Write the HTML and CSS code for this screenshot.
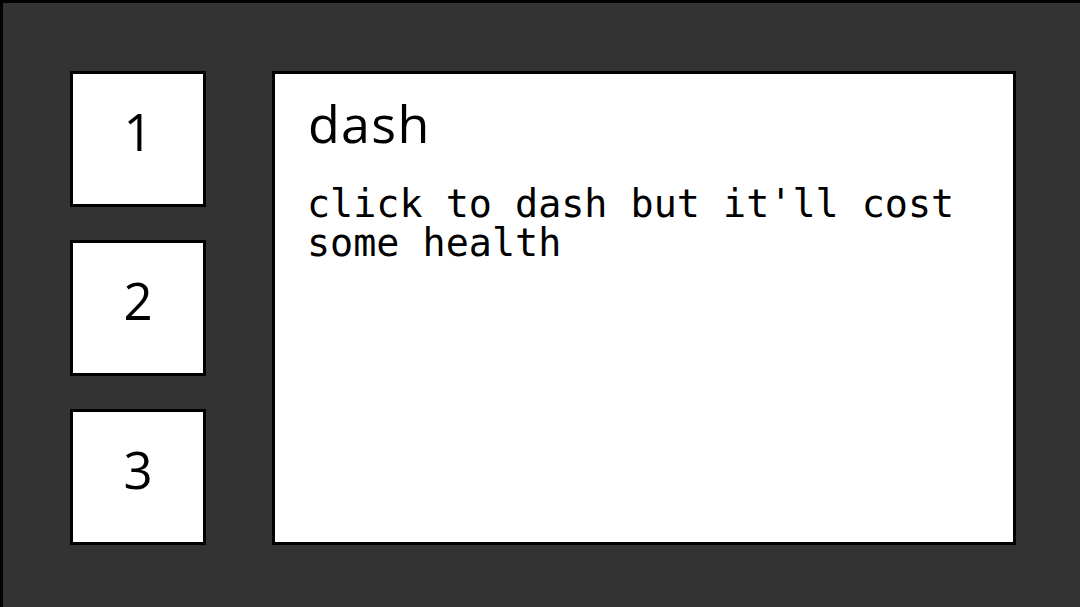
FILE: index.html
```html
<!DOCTYPE html>
<html>
<head>
<meta charset="utf-8">
<link rel="stylesheet" href="styles.css">
</head>
<body>
<div class="frame">
  <div class="slots">
    <div class="slot">1</div>
    <div class="slot">2</div>
    <div class="slot">3</div>
  </div>
  <div class="panel">
    <h1 class="title">dash</h1>
    <p class="desc">click to dash but it'll cost some health</p>
  </div>
</div>
</body>
</html>
```

FILE: styles.css
```css
html, body {
  margin: 0;
  padding: 0;
  width: 1080px;
  height: 607px;
  overflow: hidden;
  background: #333333;
}
.frame {
  box-sizing: border-box;
  width: 1080px;
  height: 607px;
  border-left: 3px solid #000;
  border-top: 3px solid #000;
  background: #333333;
  padding: 68px 0 0 67px;
  display: flex;
  align-items: flex-start;
  gap: 66px;
}
.slots {
  display: flex;
  flex-direction: column;
  gap: 33px;
  width: 136px;
}
.slot {
  box-sizing: border-box;
  width: 136px;
  height: 136px;
  background: #fff;
  border: 3px solid #000;
  display: flex;
  align-items: center;
  justify-content: center;
  padding-bottom: 17px;
  font-family: "Open Sans", sans-serif;
  font-size: 51px;
  color: #000;
}
.panel {
  box-sizing: border-box;
  width: 744px;
  height: 474px;
  background: #fff;
  border: 3px solid #000;
  padding: 13px 30px 0 32px;
}
.title {
  margin: 0 0 0 1px;
  font-family: "Open Sans", sans-serif;
  font-weight: normal;
  font-size: 52px;
  letter-spacing: 1.3px;
  line-height: normal;
  color: #000;
}
.desc {
  margin: 26px 0 0 0;
  font-family: "DejaVu Sans Mono", monospace;
  font-size: 38.4px;
  line-height: 39px;
  color: #000;
}
```
